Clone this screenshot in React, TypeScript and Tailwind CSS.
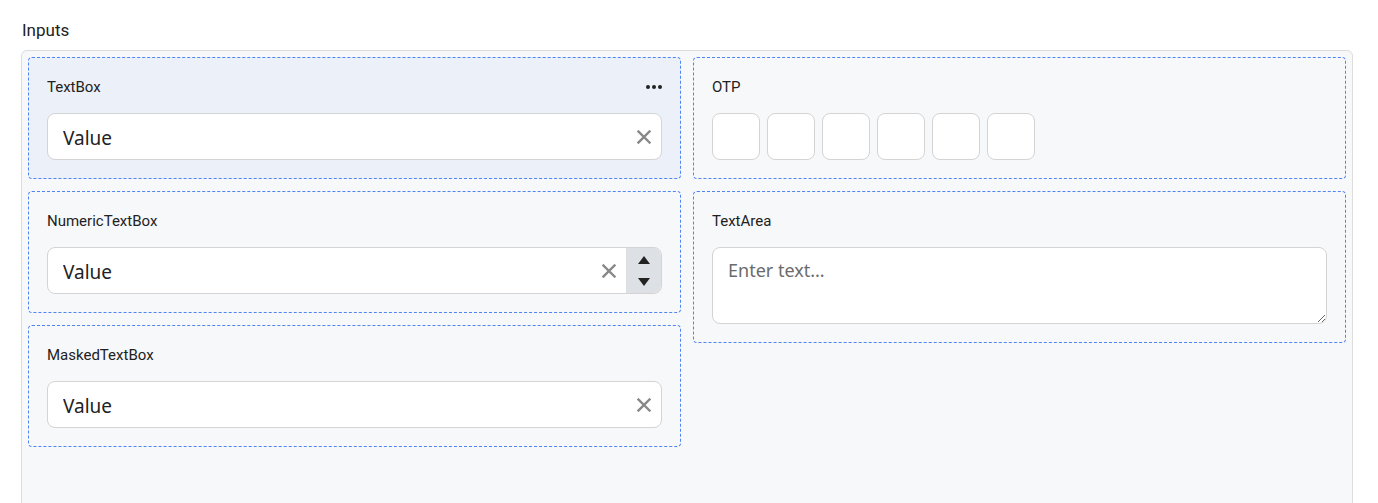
import { useState } from 'react'

// 输入控件展示页：TextBox / OTP / NumericTextBox / TextArea / MaskedTextBox

const LABEL_FONT = "font-['Roboto','Liberation_Sans',sans-serif]"
const INPUT_FONT = "font-['Noto_Sans','Open_Sans',sans-serif]"

function ClearIcon(): JSX.Element {
  return (
    <svg width="14" height="14" viewBox="0 0 14 14" className="shrink-0">
      <path d="M1.5 1.5 L12.5 12.5 M12.5 1.5 L1.5 12.5" stroke="#888" strokeWidth="2.4" strokeLinecap="square" />
    </svg>
  )
}

function DemoCard({
  title,
  selected,
  children,
}: {
  title: string
  selected?: boolean
  children: React.ReactNode
}): JSX.Element {
  return (
    <div
      className={`rounded-[4px] border border-dashed border-[#4f84f5] px-[18px] pt-[19px] pb-[18px] ${
        selected ? 'bg-[#ecf0f8]' : 'bg-[#f7f8fa]'
      }`}
    >
      <div className="flex items-center justify-between h-5 mb-4">
        <span className={`${LABEL_FONT} text-[15px] text-[#222]`}>{title}</span>
        {selected && (
          <svg width="18" height="6" viewBox="0 0 18 6" className="mr-[-1px]">
            <circle cx="3" cy="3" r="2" fill="#222" />
            <circle cx="9" cy="3" r="2" fill="#222" />
            <circle cx="15" cy="3" r="2" fill="#222" />
          </svg>
        )}
      </div>
      {children}
    </div>
  )
}

function TextInput({ spinner }: { spinner?: boolean }): JSX.Element {
  const [value, setValue] = useState('Value')
  return (
    <div className="flex h-[47px] items-stretch rounded-lg border border-[#d4d4d4] bg-white overflow-hidden">
      <input
        value={value}
        onChange={e => setValue(e.target.value)}
        className={`${INPUT_FONT} flex-1 min-w-0 bg-transparent pl-[15px] pt-[3px] text-[19px] text-[#222] outline-none`}
      />
      <button className="flex items-center justify-center pr-[10px] pl-2" onClick={() => setValue('')}>
        <ClearIcon />
      </button>
      {spinner && (
        <div className="flex w-[35px] flex-col items-center justify-center gap-[14px] bg-[#dde0e5]">
          <svg width="12" height="8" viewBox="0 0 12 8">
            <path d="M6 0 L12 8 L0 8 Z" fill="#222" />
          </svg>
          <svg width="12" height="8" viewBox="0 0 12 8">
            <path d="M0 0 L12 0 L6 8 Z" fill="#222" />
          </svg>
        </div>
      )}
    </div>
  )
}

export default function App(): JSX.Element {
  return (
    <div className="min-h-screen bg-white pl-[21px] pr-[25px] pt-[19px]">
      <div className={`${LABEL_FONT} text-[17px] text-[#222] leading-[22px] mb-[9px] pl-px`}>Inputs</div>
      <div className="rounded-[6px] border border-[#dcdcdc] bg-[#f7f8fa] p-[6px] h-[460px]">
        <div className="grid grid-cols-2 gap-3 items-start">
          <div className="flex flex-col gap-3">
            <DemoCard title="TextBox" selected>
              <TextInput />
            </DemoCard>
            <DemoCard title="NumericTextBox">
              <TextInput spinner />
            </DemoCard>
            <DemoCard title="MaskedTextBox">
              <TextInput />
            </DemoCard>
          </div>
          <div className="flex flex-col gap-3">
            <DemoCard title="OTP">
              <div className="flex gap-[7px]">
                {[0, 1, 2, 3, 4, 5].map(i => (
                  <input
                    key={i}
                    maxLength={1}
                    className={`${INPUT_FONT} h-[47px] w-[48px] rounded-lg border border-[#d4d4d4] bg-white text-center text-[19px] outline-none`}
                  />
                ))}
              </div>
            </DemoCard>
            <DemoCard title="TextArea">
              <textarea
                placeholder="Enter text..."
                className={`${INPUT_FONT} block h-[77px] w-full rounded-lg border border-[#d4d4d4] bg-white px-[15px] py-[9px] text-[18px] text-[#222] placeholder:text-[#6b6b6b] outline-none`}
              />
            </DemoCard>
          </div>
        </div>
      </div>
    </div>
  )
}
